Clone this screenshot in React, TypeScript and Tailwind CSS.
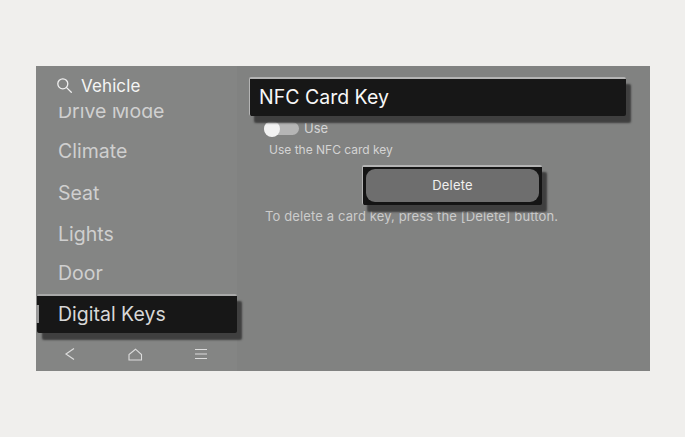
import React from "react";

const items = [
  { label: "Climate", cls: "h-[42px]" },
  { label: "Seat", cls: "h-[42px]" },
  { label: "Lights", cls: "h-[39px]" },
  { label: "Door", cls: "h-[40px]" },
];

export default function App() {
  return (
    <div
      className="w-[685px] h-[437px] bg-[#f0efed] pt-[66px] pl-[36px] overflow-hidden"
      style={{ fontFamily: 'Inter, "Noto Sans", sans-serif' }}
    >
      <div className="w-[614px] h-[305px] flex bg-[#828382]">
        {/* Sidebar */}
        <div className="w-[201px] h-full flex flex-col shrink-0 bg-[#848584]">
          <div className="h-[41px] shrink-0 flex items-start pl-[20px] pt-[11px] gap-[8px]">
            <svg width="17" height="17" viewBox="0 0 17 17" fill="none" stroke="#f0f0f0" strokeWidth="1.3" strokeLinecap="round">
              <circle cx="6.8" cy="6.8" r="5" />
              <path d="M10.6 10.6 15.3 15.3" />
            </svg>
            <span className="text-[17px] leading-[18px] text-[#f5f5f5] tracking-[0.1px]">Vehicle</span>
          </div>
          <div className="h-[24px] overflow-hidden shrink-0 relative">
            <div className="-mt-[10px] pl-[22px] text-[19.5px] leading-[28px] text-[#d0d0d0]">Drive Mode</div>
          </div>
          {items.map((it) => (
            <div key={it.label} className={`${it.cls} shrink-0 flex items-center pl-[22px] text-[19.5px] text-[#cfcfcf]`}>
              {it.label}
            </div>
          ))}
          <div className="h-[39px] ml-[1px] w-[200px] shrink-0 flex items-center pl-[21px] text-[19.5px] text-[#d8d8d8] bg-[#171717] rounded-[2px] border-t-[2px] border-[#a9a9a9] shadow-[5px_7px_2px_#3f3f3f] relative">
            <div className="absolute -left-[1px] top-[9px] w-[3px] h-[18px] bg-[#9a9a9a]" />
            Digital Keys
          </div>
          <div className="flex-1 flex items-center justify-between pl-[28px] pr-[29px] pt-[4px]">
            <svg width="12" height="14" viewBox="0 0 12 14" fill="none" stroke="#dcdcdc" strokeWidth="1.2">
              <path d="M10 1.5 2 7l8 5.5" />
            </svg>
            <svg width="15" height="13" viewBox="0 0 15 13" fill="none" stroke="#dcdcdc" strokeWidth="1.1">
              <path d="M1 12V6.5L7.5 1.2l6 5.3V12Z" />
            </svg>
            <svg width="14" height="12" viewBox="0 0 14 12" fill="none" stroke="#dcdcdc" strokeWidth="1.1">
              <path d="M1 1.5h12M1 6h12M1 10.5h12" />
            </svg>
          </div>
        </div>
        {/* Content */}
        <div className="flex-1 flex flex-col pl-[12px] pt-[11px] bg-[#818281]">
          <div className="w-[377px] h-[39px] bg-[#171717] border-t-[2px] border-l border-[#b4b4b4] rounded-[2px] flex items-center pl-[9px] text-[19.5px] text-[#f8f8f8] shadow-[5px_7px_2px_#3f3f3f] relative z-10">
            NFC Card Key
          </div>
          <div className="flex items-center pl-[15px] mt-[2px] gap-[5px]">
            <div className="w-[35px] h-[13px] rounded-full bg-[#b5b5b5] relative">
              <div className="absolute left-0 -top-[1px] w-[16px] h-[16px] rounded-full bg-[#f2f2f2]" />
            </div>
            <span className="text-[13px] leading-[20px] text-[#d4d4d4]">Use</span>
          </div>
          <div className="pl-[20px] mt-[2px] text-[12px] leading-[20px] text-[#d4d4d4]">Use the NFC card key</div>
          <div className="ml-[113px] mt-[5px] w-[180px] h-[40px] bg-[#141414] border-t-[2px] border-l border-[#b4b4b4] rounded-[2px] p-[3px] pt-[2px] shadow-[5px_7px_2px_#3f3f3f] relative z-10">
            <div className="h-full rounded-[9px] bg-[#6e6e6e] flex items-center justify-center text-[13px] text-[#f0f0f0] tracking-[0.2px]">
              Delete
            </div>
          </div>
          <div className="pl-[16px] mt-[1px] text-[13px] leading-[20px] text-[#cccccc] tracking-[0.13px]">To delete a card key, press the [Delete] button.</div>
        </div>
      </div>
    </div>
  );
}
